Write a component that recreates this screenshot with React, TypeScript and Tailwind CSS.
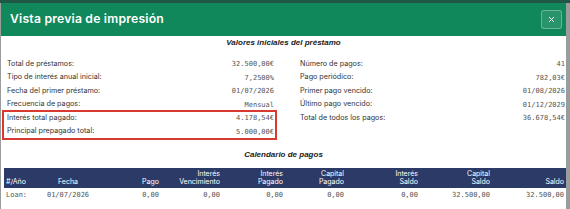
import { X } from 'lucide-react'

const left: Array<[string, string]> = [
  ['Total de préstamos:', '32.500,00€'],
  ['Tipo de interés anual inicial:', '7,2500%'],
  ['Fecha del primer préstamo:', '01/07/2026'],
  ['Frecuencia de pagos:', 'Mensual'],
  ['Interés total pagado:', '4.178,54€'],
  ['Principal prepagado total:', '5.000,00€'],
]

const right: Array<[string, string]> = [
  ['Número de pagos:', '41'],
  ['Pago periódico:', '782,03€'],
  ['Primer pago vencido:', '01/08/2026'],
  ['Último pago vencido:', '01/12/2029'],
  ['Total de todos los pagos:', '36.678,54€'],
]

const cols = [
  { top: '', bottom: '#/Año', align: 'text-left pl-[2px]' },
  { top: '', bottom: 'Fecha', align: 'text-center' },
  { top: '', bottom: 'Pago', align: 'text-right pr-[2px]' },
  { top: 'Interés', bottom: 'Vencimiento', align: 'text-right pr-[2px]' },
  { top: 'Interés', bottom: 'Pagado', align: 'text-right pr-[2px]' },
  { top: 'Capital', bottom: 'Pagado', align: 'text-right pr-[2px]' },
  { top: 'Interés', bottom: 'Saldo', align: 'text-right pr-[2px]' },
  { top: 'Capital', bottom: 'Saldo', align: 'text-right pr-[2px]' },
  { top: '', bottom: 'Saldo', align: 'text-right pr-[2px]' },
]

const loanRow = ['Loan:', '01/07/2026', '0,00', '0,00', '0,00', '0,00', '0,00', '32.500,00', '32.500,00']

const grid = 'grid w-[562px] grid-cols-[32px_64px_61px_61px_63px_61px_74px_72px_74px]'

function InfoRow({ label, value }: { label: string; value: string }) {
  return (
    <div className="flex h-[13.5px] items-center justify-between">
      <span className="font-['Inter'] text-[7.2px] text-[#333]">{label}</span>
      <span className="font-['DejaVu_Sans_Mono'] text-[7px] text-[#555]">{value}</span>
    </div>
  )
}

export default function App() {
  return (
    <div className="flex h-[209px] w-[570px] flex-col overflow-hidden bg-[#9a9d9c]">
      <div className="h-[3px] shrink-0 bg-[#1f5847]" />
      <div className="ml-[1px] flex w-[565px] flex-1 flex-col bg-white">
        {/* header */}
        <div className="flex h-[33px] shrink-0 items-center justify-between bg-[#11885b] pl-[9px] pr-[4px]">
          <h2 className="font-['Inter'] text-[12.2px] font-semibold tracking-[0.2px] text-white">
            Vista previa de impresión
          </h2>
          <button
            type="button"
            className="flex h-[19px] w-[21px] items-center justify-center rounded-[3px] border border-white/30 bg-white/10 text-white"
          >
            <X className="h-[9px] w-[9px]" strokeWidth={2.5} />
          </button>
        </div>

        {/* body */}
        <div className="relative pl-[3px]">
          <h3 className="mt-[1px] h-[12px] pr-[3px] text-center font-['Liberation_Sans'] text-[8px] font-bold italic leading-[12px] text-[#222]">
            Valores iniciales del préstamo
          </h3>
          <div className="mt-[8.5px] grid grid-cols-[267px_265px] gap-x-[26px] px-[3px]">
            <div>
              {left.map(([l, v]) => (
                <InfoRow key={l} label={l} value={v} />
              ))}
            </div>
            <div>
              {right.map(([l, v]) => (
                <InfoRow key={l} label={l} value={v} />
              ))}
            </div>
          </div>
          {/* highlight annotation */}
          <div className="absolute left-[1px] top-[74px] h-[30px] w-[275px] border-2 border-[#d93a2f]" />

          <h3 className="mt-[10.5px] h-[12px] pr-[3px] text-center font-['Liberation_Sans'] text-[8px] font-bold italic leading-[12px] text-[#222]">
            Calendario de pagos
          </h3>
          <div className={`${grid} mt-[7px] h-[20px] items-end bg-[#2c3a67] pb-[2px] font-['Inter'] text-[7px] leading-[8px] text-white`}>
            {cols.map((c, i) => (
              <div key={i} className={c.align}>
                {c.top && <div>{c.top}</div>}
                <div>{c.bottom}</div>
              </div>
            ))}
          </div>
          <div className={`${grid} h-[14px] items-center font-['DejaVu_Sans_Mono'] text-[7px] text-[#555]`}>
            {loanRow.map((v, i) => (
              <div key={i} className={cols[i].align}>
                {v}
              </div>
            ))}
          </div>
        </div>
      </div>
    </div>
  )
}
